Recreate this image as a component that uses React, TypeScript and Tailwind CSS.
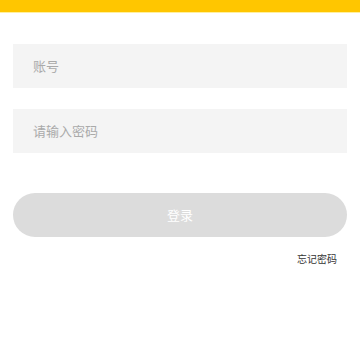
export default function App() {
  const font = { fontFamily: '"Noto Sans CJK SC", "Noto Sans", sans-serif' };
  return (
    <div className="w-[360px] h-[360px] bg-white overflow-hidden" style={font}>
      <div className="h-[13px] bg-[#ffc600] overflow-hidden border-b border-[#fff0a0] relative">
        <div className="flex items-center justify-between h-[30px] mt-[-25px] px-[10px] text-[13px] text-[#d8b000]">
          <span className="w-[24px]"></span>
          <span>登录</span>
          <span>注册</span>
        </div>
      </div>
      <div className="px-[13px] pt-[31px] flex flex-col">
        <div className="h-[44px] bg-[#f4f4f4] flex items-center px-[20px] text-[13px] text-[#aaaaaa]">账号</div>
        <div className="h-[44px] mt-[21px] bg-[#f4f4f4] flex items-center px-[20px] text-[13px] text-[#aaaaaa]">请输入密码</div>
        <div className="h-[44px] mt-[40px] bg-[#dcdcdc] rounded-full flex items-center justify-center text-[13px] text-white">登录</div>
        <div className="flex justify-end mt-[14px] pr-[10px]">
          <span className="text-[10px] text-[#333333]">忘记密码</span>
        </div>
      </div>
    </div>
  );
}
